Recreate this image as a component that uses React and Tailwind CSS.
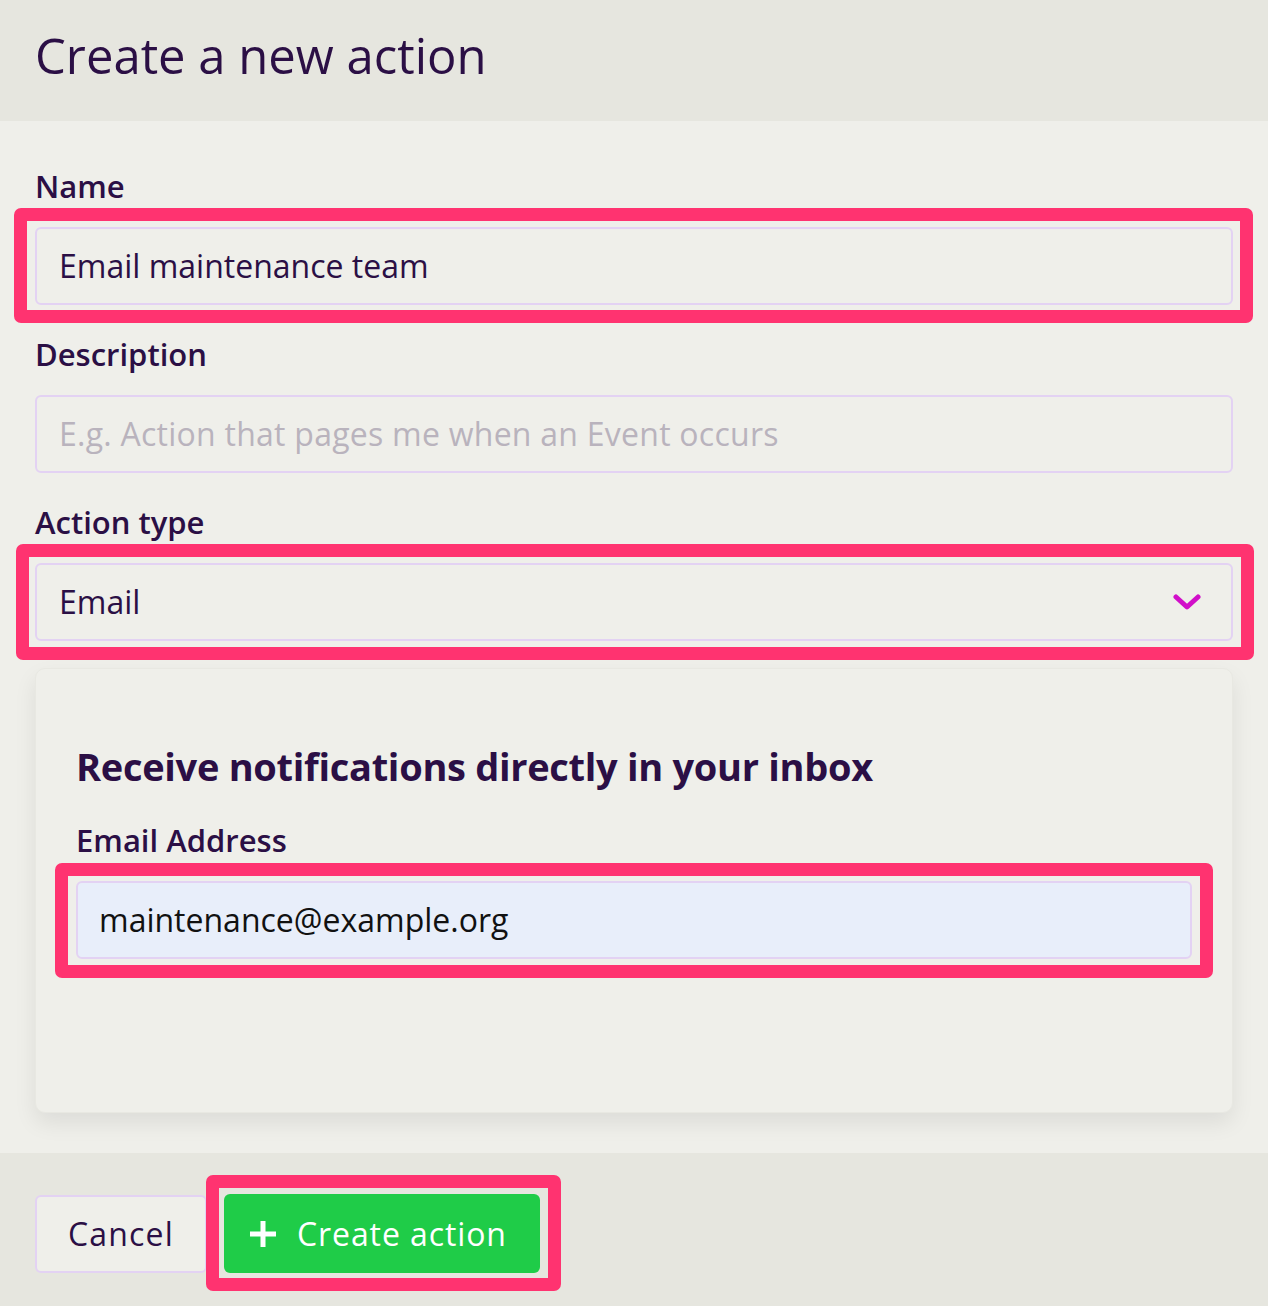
import React from "react";

const font = { fontFamily: "'Open Sans', 'Noto Sans', sans-serif" };

function Highlight({ className }) {
  return (
    <div
      className={
        "pointer-events-none absolute rounded-[7px] border-[13px] border-[#ff3370] " +
        className
      }
    />
  );
}

function Label({ children }) {
  return (
    <div className="mb-[23px] h-[36px] text-[31px] font-semibold leading-[36px] tracking-[0px] text-[#2b0f45]">
      {children}
    </div>
  );
}

export default function App() {
  return (
    <div style={font} className="min-h-[1306px] w-full bg-[#efefea] text-[#2b0f45]">
      <header className="flex h-[121px] items-center bg-[#e6e6df] px-[35px] pb-[10px]">
        <h1 className="text-[49px] font-normal leading-none text-[#2b0f45]">
          Create a new action
        </h1>
      </header>

      <main className="px-[35px] pb-[40px] pt-[47px]">
        <Label>Name</Label>
        <div className="relative">
          <div className="flex h-[78px] items-center rounded-[6px] border-2 border-[#e3d2f3] px-[22px] text-[32px] text-[#2b0f45]">
            Email maintenance team
          </div>
          <Highlight className="-bottom-[18px] -left-[21px] -right-[20px] -top-[19px]" />
        </div>

        <div className="mt-[31px]">
          <Label>Description</Label>
          <div className="flex h-[78px] items-center rounded-[6px] border-2 border-[#e3d2f3] px-[22px] text-[32px] tracking-[0.25px] text-[#b9b3bd]">
            E.g. Action that pages me when an Event occurs
          </div>
        </div>

        <div className="mt-[31px]">
          <Label>Action type</Label>
          <div className="relative">
            <div className="flex h-[78px] items-center justify-between rounded-[6px] border-2 border-[#e3d2f3] pl-[22px] pr-[30px] text-[32px] text-[#2b0f45]">
              <span>Email</span>
              <svg width="28" height="18" viewBox="0 0 28 18" fill="none">
                <path
                  d="M3 4 L14 14 L25 4"
                  stroke="#d10fc9"
                  strokeWidth="5"
                  strokeLinecap="round"
                  strokeLinejoin="round"
                />
              </svg>
            </div>
            <Highlight className="-bottom-[19px] -left-[19px] -right-[21px] -top-[19px]" />
          </div>
        </div>

        <section className="mt-[27px] h-[445px] rounded-[10px] border border-[#e8e8e2] bg-[#efefea] px-[40px] pt-[74px] shadow-[0_10px_22px_rgba(0,0,0,0.08)]">
          <h2 className="h-[46px] text-[38px] font-bold leading-[46px] tracking-[-0.3px] text-[#2b0f45]">
            Receive notifications directly in your inbox
          </h2>
          <div className="mt-[33px]">
            <Label>Email Address</Label>
            <div className="relative">
              <div className="flex h-[78px] items-center rounded-[6px] border-2 border-[#e3d2f3] bg-[#e8eefa] px-[21px] text-[32px] text-[#111111]">
                maintenance@example.org
              </div>
              <Highlight className="-bottom-[19px] -left-[21px] -right-[21px] -top-[18px]" />
            </div>
          </div>
        </section>
      </main>

      <footer className="flex h-[153px] items-start gap-[17px] bg-[#e6e6df] px-[35px] pt-[42px]">
        <button className="flex h-[78px] w-[172px] items-center justify-center rounded-[6px] border-2 border-[#e3d2f3] bg-[#efefea] text-[32px] tracking-[1.2px] text-[#2b0f45]">
          Cancel
        </button>
        <div className="relative -mt-[1px]">
          <button className="flex h-[79px] w-[316px] items-center gap-[20px] rounded-[6px] bg-[#1fcc48] pl-[25px] text-[32px] tracking-[0.9px] text-white">
            <svg width="28" height="28" viewBox="0 0 28 28" fill="none">
              <path d="M14 1 V27 M1 14 H27" stroke="white" strokeWidth="5" />
            </svg>
            <span>Create action</span>
          </button>
          <Highlight className="-bottom-[18px] -left-[18px] -right-[21px] -top-[19px]" />
        </div>
      </footer>
    </div>
  );
}
